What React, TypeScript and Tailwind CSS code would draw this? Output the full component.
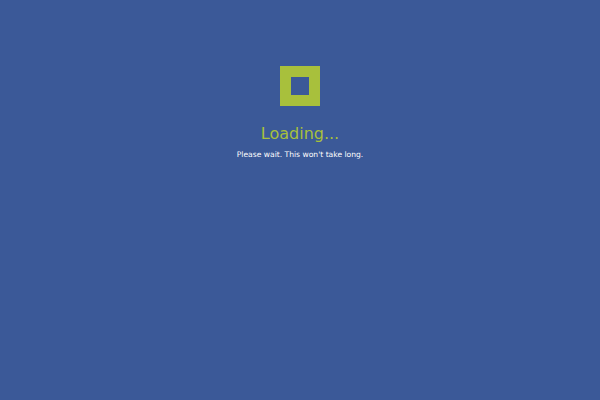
export default function App() {
  return (
    <div className="w-[600px] h-[400px] bg-[#3b5998] flex flex-col items-center pt-[66px]" style={{ fontFamily: '"DejaVu Sans", sans-serif' }}>
      <div className="w-[40px] h-[40px] border-[11px] border-[#a8c03c]" />
      <div className="mt-[18px] text-[16px] leading-[20px] text-[#a8c03c]">Loading...</div>
      <div className="mt-[6px] text-[7.6px] leading-[10px] text-white">Please wait. This won't take long.</div>
    </div>
  );
}
